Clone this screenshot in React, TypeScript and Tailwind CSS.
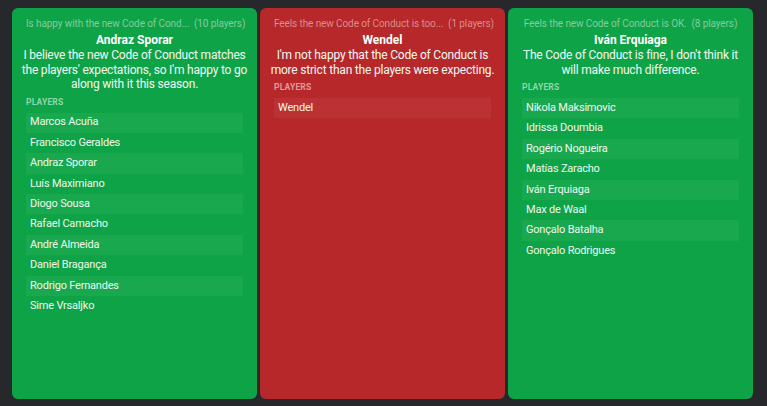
import React from 'react'

type Group = {
  tone: 'green' | 'red'
  title: string
  count: string
  name: string
  quote: string
  players: string[]
}

const groups: Group[] = [
  {
    tone: 'green',
    title: 'Is happy with the new Code of Cond...',
    count: '(10 players)',
    name: 'Andraz Sporar',
    quote: "I believe the new Code of Conduct matches the players' expectations, so I'm happy to go along with it this season.",
    players: [
      'Marcos Acuña',
      'Francisco Geraldes',
      'Andraz Sporar',
      'Luís Maximiano',
      'Diogo Sousa',
      'Rafael Camacho',
      'André Almeida',
      'Daniel Bragança',
      'Rodrigo Fernandes',
      'Sime Vrsaljko',
    ],
  },
  {
    tone: 'red',
    title: 'Feels the new Code of Conduct is too...',
    count: '(1 players)',
    name: 'Wendel',
    quote: "I'm not happy that the Code of Conduct is more strict than the players were expecting.",
    players: ['Wendel'],
  },
  {
    tone: 'green',
    title: 'Feels the new Code of Conduct is OK.',
    count: '(8 players)',
    name: 'Iván Erquiaga',
    quote: "The Code of Conduct is fine, I don't think it will make much difference.",
    players: [
      'Nikola Maksimovic',
      'Idrissa Doumbia',
      'Rogério Nogueira',
      'Matías Zaracho',
      'Iván Erquiaga',
      'Max de Waal',
      'Gonçalo Batalha',
      'Gonçalo Rodrigues',
    ],
  },
]

function GroupCard({ group }: { group: Group }) {
  const red = group.tone === 'red'
  return (
    <div
      className={`w-[245px] shrink-0 rounded-[6px] px-[14px] pt-[9px] ${red ? 'bg-[#b6282a]' : 'bg-[#0fa347]'}`}
    >
      <div
        className={`text-center text-[10px] leading-[14px] tracking-[-0.1px] whitespace-nowrap ${red ? 'text-[#dc8c8c]' : 'text-[#82cc9d]'}`}
      >
        {group.title}&nbsp;&nbsp;{group.count}
      </div>
      <div className="mt-[2px] text-center text-[12px] font-bold leading-[15px] text-white">{group.name}</div>
      <div className="-mx-[7px] text-center text-[12px] leading-[14.5px] tracking-[-0.2px] text-[#f1f8f2]">
        {group.quote}
      </div>
      <div
        className={`mt-[4px] text-[8.5px] font-bold uppercase leading-[12px] tracking-[0.2px] ${red ? 'text-[#e39a9a]' : 'text-[#8fd6a8]'}`}
      >
        Players
      </div>
      <div className="mt-[5px] flex flex-col">
        {group.players.map((p, i) => (
          <div
            key={p}
            className={`flex h-[20.4px] items-center px-[4px] text-[11px] tracking-[-0.2px] text-[#eef7ef] ${
              i % 2 === 0 ? (red ? 'bg-[#bc3234]' : 'bg-[#1aa84e]') : ''
            }`}
          >
            {p}
          </div>
        ))}
      </div>
    </div>
  )
}

export default function App() {
  return (
    <div
      className="flex h-[406px] w-[767px] gap-[3px] bg-[#27282c] pb-[7px] pl-[12px] pr-[14px] pt-[8px]"
      style={{ fontFamily: 'Roboto, "Liberation Sans", sans-serif' }}
    >
      {groups.map((g) => (
        <GroupCard key={g.name} group={g} />
      ))}
    </div>
  )
}
